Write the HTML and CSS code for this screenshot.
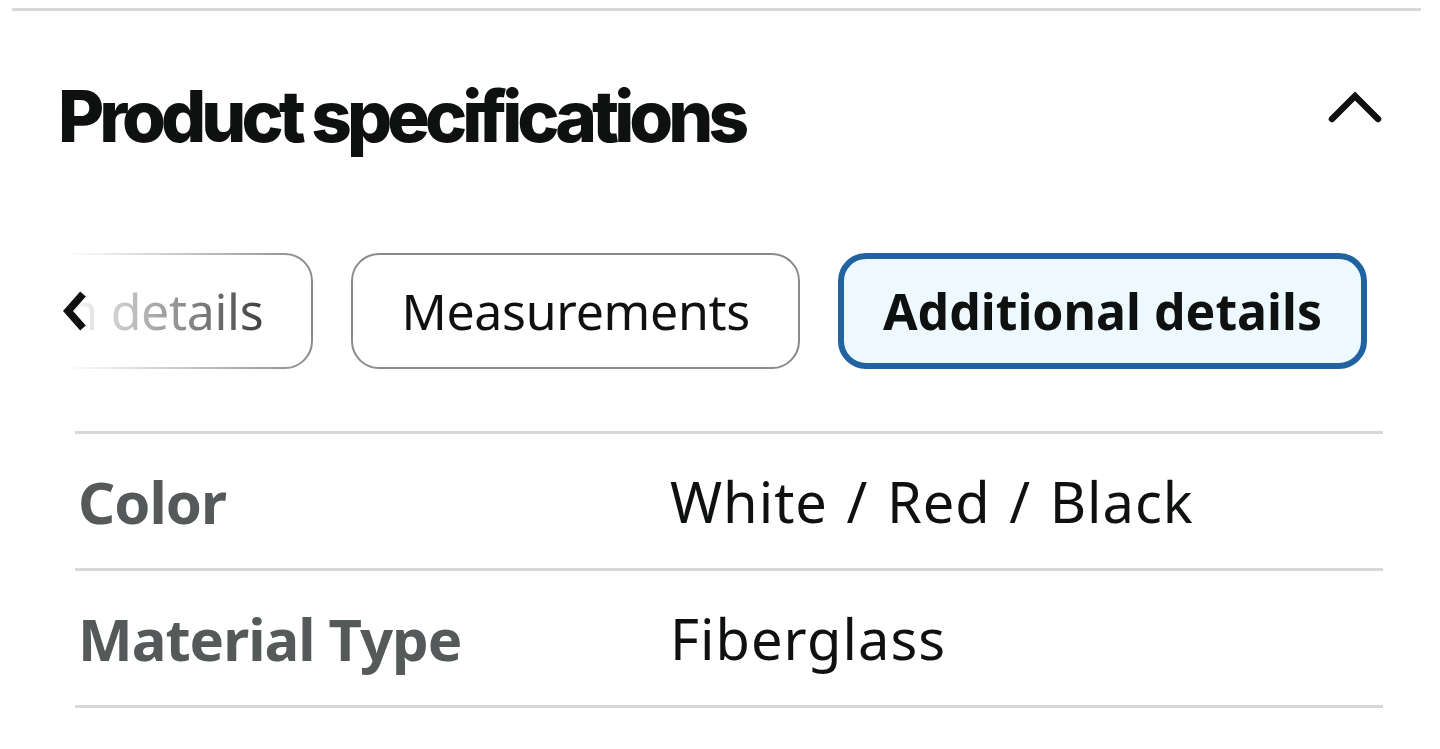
FILE: index.html
```html
<!DOCTYPE html>
<html lang="en">
<head>
  <meta charset="UTF-8">
  <title>Product specifications</title>
  <link rel="stylesheet" href="styles.css">
</head>
<body>
  <section class="specs">
    <div class="specs-head">
      <h2>Product specifications</h2>
      <button class="collapse" aria-label="Collapse">
        <svg width="56" height="36" viewBox="0 0 56 36"><path d="M5 31 L28 8 L51 31" fill="none" stroke="#0f1111" stroke-width="6.5" stroke-linecap="round" stroke-linejoin="miter"/></svg>
      </button>
    </div>

    <div class="tabs-wrap">
      <div class="tabs">
        <button class="tab">Design details</button>
        <button class="tab">Measurements</button>
        <button class="tab active">Additional details</button>
      </div>
      <div class="tabs-fade">
        <svg width="30" height="44" viewBox="0 0 30 44"><path d="M23 5 L8 22 L23 39" fill="none" stroke="#0f1111" stroke-width="7.5"/></svg>
      </div>
    </div>

    <table class="spec-table">
      <tr>
        <th>Color</th>
        <td>White / Red / Black</td>
      </tr>
      <tr>
        <th>Material Type</th>
        <td>Fiberglass</td>
      </tr>
    </table>
  </section>
</body>
</html>
```

FILE: styles.css
```css
body {
  margin: 0;
  background: #fff;
  color: #0f1111;
  font-family: "Noto Sans", "Open Sans", sans-serif;
}

.specs {
  margin: 8px 19px 0 12px;
  border-top: 3px solid #d5d9d9;
}

.specs-head {
  display: flex;
  justify-content: space-between;
  align-items: center;
  height: 210px;
  padding: 0 38px 0 46px;
}

.specs-head h2 {
  margin: 0;
  font-family: Inter, "Noto Sans", sans-serif;
  font-weight: 800;
  font-size: 71px;
  letter-spacing: -5px;
}

.collapse {
  border: 0;
  background: none;
  padding: 0;
  margin-top: -18px;
}

.tabs-wrap {
  position: relative;
  margin: 30px 54px 0 0;
}

.tabs {
  display: flex;
  justify-content: flex-end;
  gap: 38px;
  overflow: hidden;
  padding: 2px 0;
}

.tab {
  flex-shrink: 0;
  height: 116px;
  padding: 0 48px;
  border: 2px solid #888c8c;
  border-radius: 28px;
  background: #fff;
  color: #0f1111;
  font-family: "Noto Sans", sans-serif;
  font-size: 50px;
  letter-spacing: -0.3px;
}

.tab.active {
  border: 6px solid #2162a1;
  background: #edf8ff;
  font-weight: 700;
  padding: 0 39px;
  letter-spacing: 0;
}

.tabs-fade {
  position: absolute;
  left: 0;
  top: 0;
  bottom: 0;
  width: 300px;
  display: flex;
  align-items: center;
  padding-left: 48px;
  box-sizing: border-box;
  background: linear-gradient(to right, #fff 18%, rgba(255, 255, 255, 0) 100%);
}

.spec-table {
  margin: 60px 0 0 63px;
  width: 1308px;
  border-collapse: collapse;
}

.spec-table tr {
  border-top: 3px solid #d5d9d9;
  border-bottom: 3px solid #d5d9d9;
  height: 137px;
}

.spec-table th {
  width: 592px;
  padding: 0 0 0 3px;
  text-align: left;
  color: #565959;
  font-size: 58px;
  font-weight: 700;
  letter-spacing: -1px;
}

.spec-table td {
  padding: 0;
  font-size: 56px;
  letter-spacing: 1px;
  word-spacing: 3px;
}
```
